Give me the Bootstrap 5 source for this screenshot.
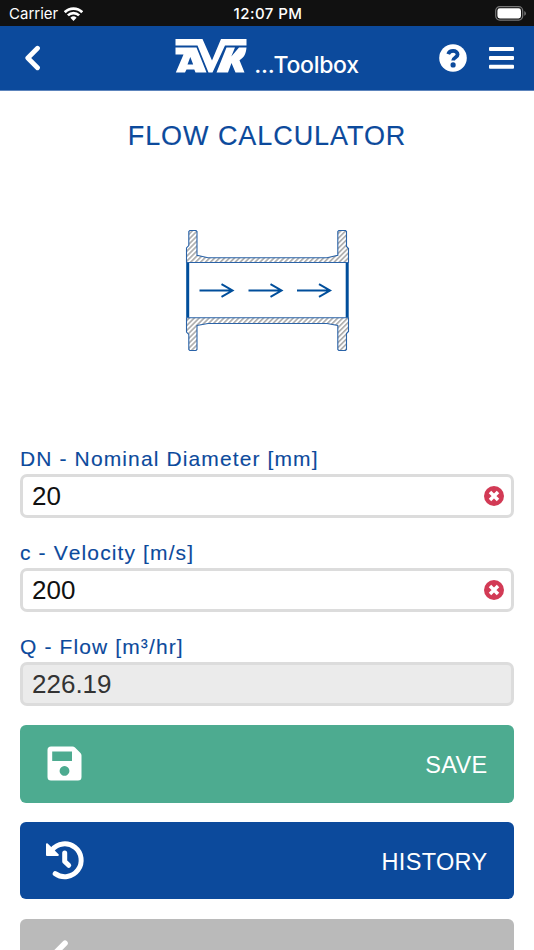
<!DOCTYPE html>
<html lang="en">
<head>
<meta charset="utf-8">
<meta name="viewport" content="width=device-width, initial-scale=1">
<title>Flow Calculator</title>
<link href="https://cdn.jsdelivr.net/npm/bootstrap@5.3.0/dist/css/bootstrap.min.css" rel="stylesheet">
<style>
  :root { --avk-blue: #0c4a9c; }
  body { font-family: "Liberation Sans", Arial, sans-serif; height: 950px; }
  main { min-height: 0; }
  .status-bar { height: 26px; background: #111; font: 15px/26px Inter, sans-serif; padding: 1px 7px 0 9px; }
  .side { flex: 1 1 0; }
  .clock { font-weight: 550; letter-spacing: .45px; }
  .wifi { margin-left: 6px; }
  .app-bar { height: 65px; background: var(--avk-blue); border-bottom: 1px solid #5c84bc; padding: 0 20px 1px; }
  .brand-text { font: 450 23px/24px Inter, sans-serif; letter-spacing: -.3px; }
  .brand-logo { margin-right: 7px; }
  .help-icon { margin-right: 22px; }
  .page-title { font-size: 27px; line-height: 32px; letter-spacing: .93px; color: var(--avk-blue); margin-top: 28.500px; -webkit-text-stroke: .15px; }
  .drawing { margin-top: 76.500px; }
  .calc-form { margin-top: 94px; padding: 0 20px; }
  .field-label { display: block; font-size: 21px; line-height: 26px; letter-spacing: 1.12px; font-kerning: none; color: var(--avk-blue); margin-bottom: 2px; -webkit-text-stroke: .12px; }
  .field-box { height: 43.6px; border: 3px solid #dcdcdc; border-radius: 7px; padding: 0 7px 0 9px; margin-bottom: 22.5px; background: #fff; }
  .field-box .form-control { font-size: 26px; line-height: 36px; color: #111; }
  .field-box.result { background: #ebebeb; margin-bottom: 19.4px; }
  .field-box.result .form-control { color: #333; }
  .action { height: 77.4px; border: 0; border-radius: 6px; font-size: 23.5px; letter-spacing: .35px; margin-bottom: 19.4px; padding: 0 26.500px 0 26px; color: #fff; }
  .action span { padding-top: 4px; }
  .action-save { background: #4dab90; }
  .action-history { background: var(--avk-blue); }
  .action-back { background: #bababa; }
  .action-back span { padding-top: 7px; }
</style>
<script src="https://cdn.jsdelivr.net/npm/bootstrap@5.3.0/dist/js/bootstrap.bundle.min.js"></script>
</head>
<body class="d-flex flex-column overflow-hidden bg-white">
<div class="status-bar d-flex flex-shrink-0 align-items-center text-white">
  <div class="side d-flex align-items-center">
    <span>Carrier</span>
    <svg class="wifi" width="19" height="14" viewBox="0 0 19 14" fill="none" stroke="#fff" stroke-width="2.700"><path d="M.8 5.2a12.4 12.4 0 0 1 17.4 0M3.9 8.4a8 8 0 0 1 11.2 0"/><path d="M9.5 13.9 6.4 10.7a4.6 4.6 0 0 1 6.2 0z" fill="#fff" stroke="none"/></svg>
  </div>
  <span class="clock">12:07 PM</span>
  <div class="side d-flex justify-content-end">
    <svg width="32" height="15" viewBox="0 0 32 15"><rect x=".7" y=".7" width="27" height="13.4" rx="4" fill="none" stroke="#777" stroke-width="1.2"/><rect x="2.4" y="2.3" width="23.6" height="10.2" rx="2.4" fill="#fff"/><path d="M29.3 5q1.6.8 1.6 2.4t-1.6 2.4z" fill="#777"/></svg>
  </div>
</div>
<nav class="app-bar d-flex flex-shrink-0 align-items-center text-white">
  <div class="side">
    <svg class="d-block ms-1" width="18" height="26" viewBox="0 0 18 26" fill="none" stroke="#fff" stroke-width="4.800" stroke-linecap="round" stroke-linejoin="round"><path d="M13.500 3.300 3.800 13l9.700 9.700"/></svg>
  </div>
  <div class="d-flex align-items-end">
    <svg class="brand-logo mb-1" width="72" height="35" viewBox="0 0 72 35" fill="#fff">
      <path d="M.5 1H27.500L37 22.500 46 1H71.500V7.500H50L37.500 34.500H33.500L22.500 7.500H.5z"/>
      <path fill-rule="evenodd" d="M.5 9.500H21.500L31.500 34.500H20.500L19.300 31.500H11.500L10 34.500H.8L8.500 16.500H.5zM15.300 19 12.500 26.500H18.200z"/>
      <path d="M51.500 9.500H60L56.300 18.500 64 9.500H71.500C71 15 69.500 19.500 64.500 22.200L69.500 34.500H60.500L56.500 25 53 34.500H41.500z"/>
    </svg>
    <span class="brand-text">...Toolbox</span>
  </div>
  <div class="side d-flex justify-content-end align-items-center">
    <svg class="help-icon" width="28" height="28" viewBox="0 0 28 28"><circle cx="14" cy="14" r="13.800" fill="#fff"/><path d="M9.200 10.100C10 7.900 11.700 6.900 14.100 6.900c2.600 0 4.500 1.400 4.500 3.600 0 3-4.500 3-4.500 6.100" fill="none" stroke="#0c4a9c" stroke-width="3.800"/><circle cx="14.100" cy="20.900" r="2.600" fill="#0c4a9c"/></svg>
    <svg width="25" height="22" viewBox="0 0 25 22" fill="#fff"><rect width="25" height="4" rx="1"/><rect y="8.900" width="25" height="4" rx="1"/><rect y="17.800" width="25" height="4" rx="1"/></svg>
  </div>
</nav>
<main class="flex-fill overflow-hidden">
  <h1 class="page-title text-center fw-normal mb-0">FLOW CALCULATOR</h1>
  <svg class="drawing d-block mx-auto" width="166" height="124" viewBox="184 228 166 124" stroke="#2a63a8" stroke-width="1.100">
    <defs><pattern id="hatch" width="3.500" height="3.500" patternUnits="userSpaceOnUse" patternTransform="rotate(45)"><rect width="3.500" height="3.500" fill="#fff" stroke="none"/><path d="M1.700 0V3.500" stroke="#aaa" stroke-width="1.600"/></pattern></defs>
    <g fill="url(#hatch)">
      <path d="M186.500 262.500V248L188.800 245.500V231.500L189.800 230.500H196L197 231.500V255.200L208 257.800H327L337.800 255.200V231.500L338.800 230.500H345.500L346.500 231.500V246.500L348.500 248.500V262.500z"/>
      <path d="M186.500 317.800V332L188.800 334.500V349.500L189.800 350.500H196L197 349.500V325.500L208 323.500H327L337.800 325.500V349.500L338.800 350.500H345.500L346.500 349.500V333.500L348.500 331.500V317.800z"/>
    </g>
    <path d="M187.700 263V317.500M347.200 263V317.500" stroke="#004e9b" stroke-width="3" fill="none"/>
    <g fill="none" stroke="#004e9b" stroke-width="2"><path d="M199.500 290.500H232M221.500 284.200 232.500 290.500 221.500 296.800"/><path d="M248.500 290.500H281M270.500 284.200 281.500 290.500 270.500 296.800"/><path d="M297 290.500H329.500M319 284.200 330 290.500 319 296.800"/></g>
  </svg>
  <form class="calc-form">
    <label class="field-label" for="dn">DN - Nominal Diameter [mm]</label>
    <div class="field-box d-flex align-items-center">
      <input id="dn" class="form-control border-0 bg-transparent p-0 shadow-none" value="20">
      <svg class="flex-shrink-0" width="20" height="20" viewBox="0 0 20 20"><circle cx="10" cy="10" r="10" fill="#d23a55"/><path d="m6 6 8 8m0-8-8 8" stroke="#fff" stroke-width="3.500"/></svg>
    </div>
    <label class="field-label" for="vel">c - Velocity [m/s]</label>
    <div class="field-box d-flex align-items-center">
      <input id="vel" class="form-control border-0 bg-transparent p-0 shadow-none" value="200">
      <svg class="flex-shrink-0" width="20" height="20" viewBox="0 0 20 20"><circle cx="10" cy="10" r="10" fill="#d23a55"/><path d="m6 6 8 8m0-8-8 8" stroke="#fff" stroke-width="3.500"/></svg>
    </div>
    <label class="field-label" for="flow">Q - Flow [m³/hr]</label>
    <div class="field-box result d-flex align-items-center">
      <input id="flow" class="form-control border-0 bg-transparent p-0 shadow-none" value="226.19" readonly>
    </div>
    <button type="button" class="action action-save w-100 d-flex align-items-center justify-content-between">
      <svg width="38" height="38" viewBox="0 0 38 38"><path fill="#fff" fill-rule="evenodd" d="M5 1.500H26.500Q28 1.500 29 2.500L34.500 8Q35.500 9 35.500 10.500V32Q35.500 35.500 32 35.500H5Q1.500 35.500 1.500 32V5Q1.500 1.500 5 1.500zM6.200 6.500V16H26V6.500zM18.500 21a4.900 4.900 0 1 0 .01 0z"/></svg>
      <span>SAVE</span>
    </button>
    <button type="button" class="action action-history w-100 d-flex align-items-center justify-content-between">
      <svg class="overflow-visible" width="38" height="38" viewBox="0 0 38 38" fill="none" stroke="#fff" stroke-width="5" stroke-linecap="round" stroke-linejoin="round"><path d="M6 8A16.400 16.400 0 1 1 9.200 31.600"/><path d="M18.700 11V19.500L22.700 23.300"/><path d="M1 2.200V13H11.800z" fill="#fff" stroke-width="2"/></svg>
      <span>HISTORY</span>
    </button>
    <button type="button" class="action action-back w-100 d-flex align-items-center justify-content-between">
      <svg width="38" height="38" viewBox="0 0 38 38" fill="none" stroke="#fff" stroke-width="5.600" stroke-linecap="round" stroke-linejoin="round"><path d="M19 5.300 5.500 18.800 19 32.300"/></svg>
      <span>BACK</span>
    </button>
  </form>
</main>
</body>
</html>
